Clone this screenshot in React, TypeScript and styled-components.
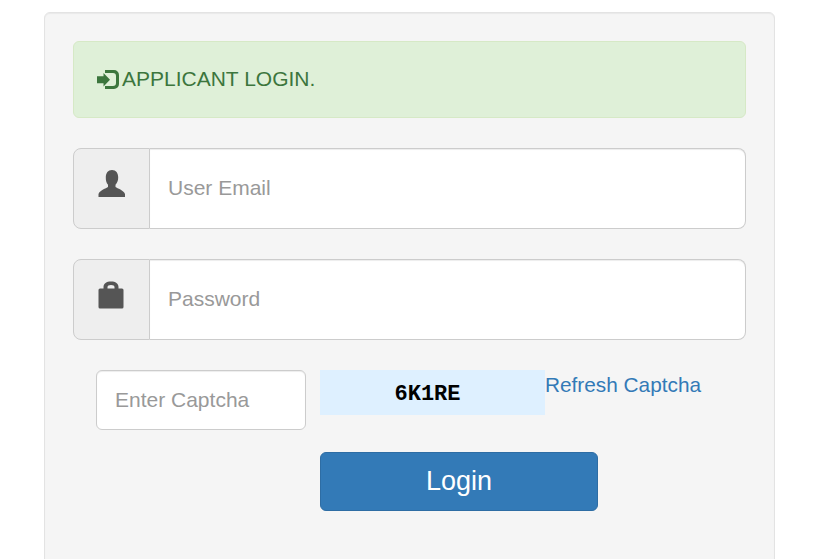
import React from "react";
import styled, { createGlobalStyle } from "styled-components";

const Global = createGlobalStyle`
  html, body { margin: 0; padding: 0; background: #fff; height: 559px; overflow: hidden; }
  body { font-family: "Liberation Sans", Arial, sans-serif; color: #333; }
  * { box-sizing: border-box; }
`;

const Page = styled.div`
  padding: 12px 42px 0 44px;
  height: 559px;
  overflow: hidden;
`;

const Well = styled.div`
  width: 731px;
  height: 600px;
  padding: 28px;
  background: #f5f5f5;
  border: 1px solid #e3e3e3;
  border-radius: 6px;
  box-shadow: inset 0 1px 1px rgba(0, 0, 0, 0.05);
`;

const Alert = styled.div`
  height: 77px;
  display: flex;
  align-items: center;
  padding: 0 0 2px 23px;
  margin-bottom: 30px;
  background: #dff0d8;
  border: 1px solid #d6e9c6;
  border-radius: 6px;
  color: #3c763d;
  font-size: 21px;
`;

const AlertIcon = styled.svg`
  width: 25px;
  height: 20px;
  flex: none;
  fill: #3c763d;
  margin-top: 2px;
`;

const InputGroup = styled.div`
  display: flex;
  height: 81px;
  margin-bottom: 30px;
`;

const Addon = styled.div`
  width: 77px;
  flex: none;
  display: flex;
  align-items: center;
  justify-content: center;
  background: #eee;
  border: 1px solid #ccc;
  border-radius: 8px 0 0 8px;
`;

const AddonIcon = styled.svg`
  width: 28px;
  height: 29px;
  fill: #555;
  margin-top: -11px;
`;

const Field = styled.input`
  flex: 1;
  min-width: 0;
  height: 100%;
  padding: 0 18px 2px;
  background: #fff;
  border: 1px solid #ccc;
  border-left: 0;
  border-radius: 0 8px 8px 0;
  box-shadow: inset 0 1px 1px rgba(0, 0, 0, 0.075);
  font: 21px "Liberation Sans", Arial, sans-serif;
  color: #555;
  outline: none;
  &::placeholder { color: #999; opacity: 1; }
`;

const CaptchaRow = styled.div`
  display: flex;
  align-items: flex-start;
  padding-left: 23px;
`;

const CaptchaField = styled.input`
  width: 210px;
  height: 60px;
  flex: none;
  margin-right: 14px;
  padding: 0 18px;
  background: #fff;
  border: 1px solid #ccc;
  border-radius: 6px;
  box-shadow: inset 0 1px 1px rgba(0, 0, 0, 0.075);
  font: 21px "Liberation Sans", Arial, sans-serif;
  color: #555;
  outline: none;
  &::placeholder { color: #999; opacity: 1; }
`;

const CaptchaColumn = styled.div`
  display: flex;
  flex-direction: column;
  align-items: flex-start;
`;

const CaptchaLine = styled.div`
  display: flex;
  align-items: flex-start;
  height: 82px;
`;

const CaptchaImage = styled.div`
  width: 225px;
  height: 45px;
  display: flex;
  align-items: center;
  justify-content: center;
  padding: 3px 10px 0 0;
  background: #def0ff;
  color: #000;
  font: bold 22px "Liberation Mono", monospace;
`;

const RefreshLink = styled.a`
  color: #337ab7;
  font-size: 20.8px;
  line-height: 30px;
  text-decoration: none;
`;

const LoginButton = styled.button`
  width: 278px;
  height: 59px;
  background: #337ab7;
  border: 1px solid #2e6da4;
  border-radius: 6px;
  color: #fff;
  font: 27px "Liberation Sans", Arial, sans-serif;
`;

export default function App() {
  return (
    <Page>
      <Global />
      <Well>
        <Alert>
          <AlertIcon viewBox="0 0 25 20">
            <path d="M0 6.200h6.500V3l6.500 6.700L6.500 16.500v-3.300H0z" />
            <path d="M8 0h9a5 5 0 0 1 5 5v9a5 5 0 0 1-5 5H8v-3h8a3 3 0 0 0 3-3V6a3 3 0 0 0-3-3H8z" />
          </AlertIcon>
          APPLICANT LOGIN.
        </Alert>
        <InputGroup>
          <Addon>
            <AddonIcon viewBox="0 0 28 29">
              <path d="M14 1c4 0 6.200 3 6.200 7.500 0 3-1 5.500-2.700 7.200v2.300c2 1.500 8 3 9.500 7V28H.5v-3c1.500-4 7.500-5.500 9.500-7v-2.300C8.300 14 7.800 11.500 7.800 8.500 7.800 4 10 1 14 1z" />
            </AddonIcon>
          </Addon>
          <Field placeholder="User Email" />
        </InputGroup>
        <InputGroup>
          <Addon>
            <AddonIcon viewBox="0 0 28 29">
              <path fillRule="evenodd" d="M5.500 8.500V7c0-3.500 3-5.500 7.500-5.500s7.500 2 7.500 5.500v1.500H24A1.500 1.500 0 0 1 25.500 10v17a1.500 1.500 0 0 1-1.500 1.500H2A1.500 1.500 0 0 1 .5 27V10A1.500 1.500 0 0 1 2 8.500zm4 0h7V7c0-1.300-1.300-2-3.500-2s-3.500.7-3.500 2z" />
            </AddonIcon>
          </Addon>
          <Field placeholder="Password" />
        </InputGroup>
        <CaptchaRow>
          <CaptchaField placeholder="Enter Captcha" />
          <CaptchaColumn>
            <CaptchaLine>
              <CaptchaImage>6K1RE</CaptchaImage>
              <RefreshLink href="#">Refresh Captcha</RefreshLink>
            </CaptchaLine>
            <LoginButton>Login</LoginButton>
          </CaptchaColumn>
        </CaptchaRow>
      </Well>
    </Page>
  );
}
